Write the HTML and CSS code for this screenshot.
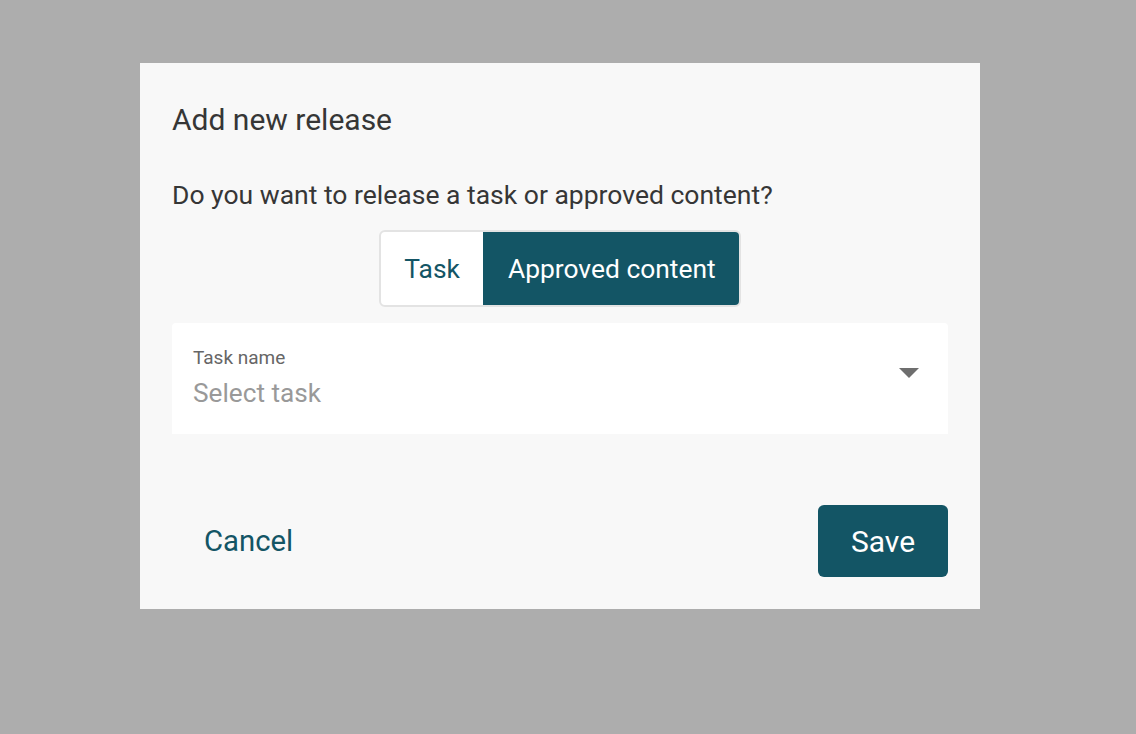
FILE: index.html
```html
<!DOCTYPE html>
<html>
<head>
<meta charset="utf-8">
<link rel="stylesheet" href="styles.css">
</head>
<body>
<div class="overlay">
  <div class="dialog">
    <h1 class="title">Add new release</h1>
    <p class="question">Do you want to release a task or approved content?</p>
    <div class="seg-wrap">
      <div class="segmented">
        <div class="seg">Task</div>
        <div class="seg active">Approved content</div>
      </div>
    </div>
    <div class="field">
      <div class="field-text">
        <div class="field-label">Task name</div>
        <div class="field-value">Select task</div>
      </div>
      <svg class="caret" width="20" height="10" viewBox="0 0 20 10"><path d="M0 0 H20 L10 10 Z" fill="#6e6e6e"/></svg>
    </div>
    <div class="footer">
      <button class="btn-text">Cancel</button>
      <button class="btn-primary">Save</button>
    </div>
  </div>
</div>
</body>
</html>
```
FILE: styles.css
```css
html, body {
  margin: 0;
  padding: 0;
  height: 100%;
}
body {
  background: #adadad;
  font-family: Roboto, "Liberation Sans", sans-serif;
  color: #333;
}
.overlay {
  padding: 63px 0 0 140px;
}
.dialog {
  width: 840px;
  height: 546px;
  box-sizing: border-box;
  background: #f8f8f8;
  padding: 32px;
  display: flex;
  flex-direction: column;
}
.title {
  margin: 0;
  font-size: 30px;
  font-weight: 400;
  line-height: 50px;
  color: #363636;
}
.question {
  margin: 35px 0 0 0;
  font-size: 26.5px;
  line-height: 30px;
  color: #363636;
}
.seg-wrap {
  display: flex;
  justify-content: center;
  margin-top: 20px;
}
.segmented {
  display: flex;
  border: 2px solid #e3e3e3;
  border-radius: 6px;
  overflow: hidden;
  height: 73px;
  box-sizing: content-box;
  background: #fff;
}
.seg {
  display: flex;
  align-items: center;
  padding: 0 23px;
  font-size: 26.4px;
  color: #135565;
}
.seg.active {
  background: #135565;
  color: #fff;
  padding: 0 23px 0 25px;
}
.field {
  margin-top: 16px;
  height: 111px;
  background: #fff;
  border-radius: 4px 4px 0 0;
  display: flex;
  align-items: flex-start;
  padding: 24px 29px 0 21px;
  box-sizing: border-box;
}
.field-text {
  flex: 1;
  display: flex;
  flex-direction: column;
}
.field-label {
  font-size: 19px;
  line-height: 22px;
  color: #666;
}
.field-value {
  font-size: 26.2px;
  line-height: 34px;
  margin-top: 7px;
  color: #999;
}
.caret {
  display: block;
  margin-top: 21px;
}
.footer {
  margin-top: auto;
  display: flex;
  justify-content: space-between;
  align-items: center;
}
.btn-text {
  background: none;
  border: none;
  font-family: inherit;
  font-size: 29.3px;
  color: #135565;
  padding: 0 32px;
  height: 72px;
  cursor: pointer;
}
.btn-primary {
  background: #135565;
  border: none;
  border-radius: 6px;
  font-family: inherit;
  font-size: 30px;
  color: #fff;
  width: 130px;
  height: 72px;
  cursor: pointer;
}
```
